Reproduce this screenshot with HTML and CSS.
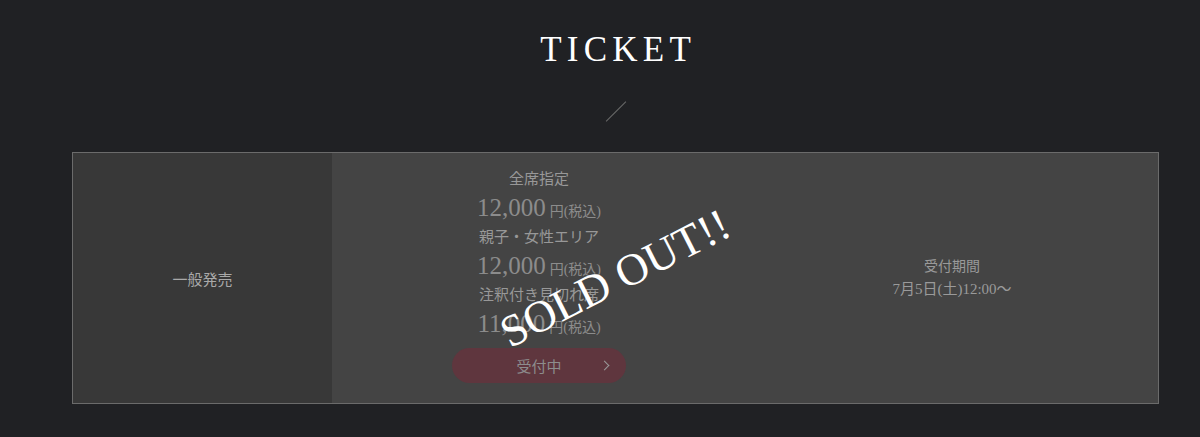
FILE: index.html
```html
<!DOCTYPE html>
<html lang="ja">
<head>
    <meta charset="UTF-8">
    <meta name="viewport" content="width=device-width, initial-scale=1.0">
    <title>TICKET</title>
    <link rel="stylesheet" href="styles.css">
</head>
<body>

<section class="ticket">
    <h2 class="ticket-title">TICKET</h2>
    <div class="ticket-slash"></div>

    <div class="ticket-table">
        <div class="cell cell-type">一般発売</div>

        <div class="cell cell-price">
            <div class="price-list">
                <p class="seat">全席指定</p>
                <p class="price">12,000<span class="yen">円(税込)</span></p>
                <p class="seat">親子・女性エリア</p>
                <p class="price">12,000<span class="yen">円(税込)</span></p>
                <p class="seat">注釈付き見切れ席</p>
                <p class="price">11,000<span class="yen">円(税込)</span></p>
            </div>
            <a class="entry-btn" href="#">受付中<span class="arrow"></span></a>
            <!-- overlay stamp -->
            <div class="sold-out">SOLD OUT!!</div>
        </div>

        <div class="cell cell-period">
            <p class="period-label">受付期間</p>
            <p class="period-date">7月5日(土)12:00〜</p>
        </div>
    </div>
</section>

</body>
</html>
```

FILE: styles.css
```css
body {
    margin: 0;
    background-color: #202124;
    font-family: "Liberation Serif", "Noto Sans CJK JP", serif;
    color: #9a9a9a;
}
p {
    margin: 0;
}
.ticket {
    padding: 30px 42px 32px 73px;
    display: flex;
    flex-direction: column;
    align-items: center;
}
.ticket-title {
    margin: 0;
    font-weight: normal;
    font-size: 35px;
    line-height: 40px;
    letter-spacing: 0.15em;
    padding-left: 0.15em;
    color: #ffffff;
}
/* small diagonal divider */
.ticket-slash {
    width: 28px;
    height: 1px;
    background-color: #6a6a6a;
    transform: rotate(-45deg);
    margin: 41px 0 40px 0;
}
.ticket-table {
    width: 100%;
    display: grid;
    grid-template-columns: 259px 414px 1fr;
    border: 1px solid #6b6b6b;
    background-color: #444444;
}
.cell {
    display: flex;
    flex-direction: column;
    align-items: center;
    justify-content: center;
    font-size: 15px;
}
.cell-type {
    background-color: #383838;
    color: #a9a9a9;
}
.cell-price {
    position: relative;
    padding: 15px 0 20px 0;
    justify-content: flex-start;
}
.price-list {
    text-align: center;
    opacity: 0.75;
}
.seat {
    font-size: 15px;
    line-height: 22px;
    height: 22px;
    color: #b5b5b5;
}
.price {
    font-size: 25px;
    line-height: 36px;
    height: 36px;
    color: #a5a5a5;
}
.yen {
    font-size: 14px;
    line-height: 1;
    margin-left: 4px;
}
.entry-btn {
    position: relative;
    margin-top: 6px;
    width: 174px;
    height: 35px;
    border-radius: 18px;
    background-color: #5f363e;
    color: #8d8d8d;
    text-decoration: none;
    font-size: 15px;
    display: flex;
    align-items: center;
    justify-content: center;
}
.arrow {
    position: absolute;
    right: 18px;
    top: 14px;
    width: 6px;
    height: 6px;
    border-top: 1px solid #9a9a9a;
    border-right: 1px solid #9a9a9a;
    transform: rotate(45deg);
}
.sold-out {
    position: absolute;
    left: 50%;
    top: 99px;
    transform: translateX(-50%) translateX(76px) rotate(-27deg);
    white-space: nowrap;
    font-size: 45px;
    color: #ffffff;
}
.cell-period {
    justify-content: flex-start;
    padding-top: 103px;
    color: #9a9a9a;
}
.period-label {
    font-size: 14px;
    line-height: 22px;
}
.period-date {
    font-size: 15px;
    line-height: 22px;
}
```
